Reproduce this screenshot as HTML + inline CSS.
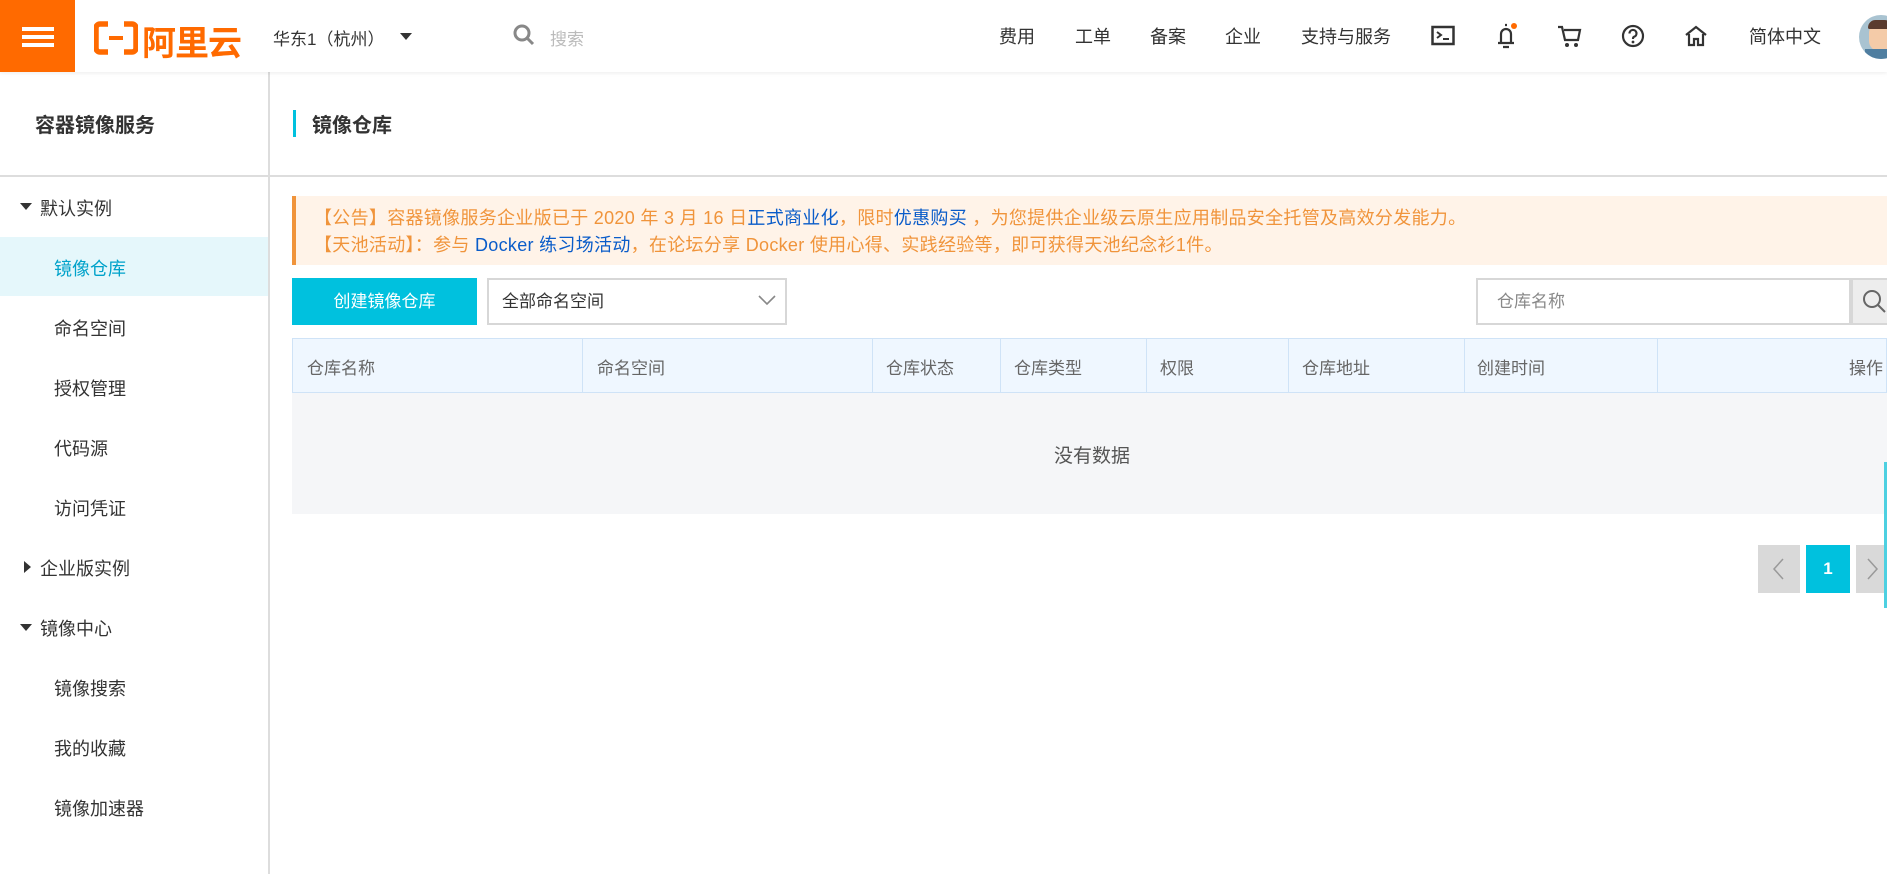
<!DOCTYPE html>
<html><head><meta charset="utf-8"><style>
*{margin:0;padding:0;box-sizing:border-box}
body{width:1887px;height:874px;overflow:hidden;background:#fff;font-family:"Liberation Sans","Noto Sans CJK SC",sans-serif;color:#333;position:relative}
.a{position:absolute;white-space:nowrap}
.hdr{position:absolute;left:0;top:0;width:1887px;height:72px;background:#fff;box-shadow:0 1px 4px rgba(0,0,0,.08);z-index:2}
.nav{font-size:18px;color:#333;top:23px}
.menu{font-size:18px;color:#333}
.th{font-size:17px;color:#666;top:354px}
.col{position:absolute;top:338px;width:1px;height:55px;background:#cfe3f7}
</style></head><body>
<div class="hdr">
 <div class="a" style="left:0;top:0;width:75px;height:72px;background:#ff6a00">
  <div class="a" style="left:22px;top:27px;width:32px;height:4px;background:#fff"></div>
  <div class="a" style="left:22px;top:35px;width:32px;height:4px;background:#fff"></div>
  <div class="a" style="left:22px;top:43px;width:32px;height:4px;background:#fff"></div>
 </div>
 <svg class="a" style="left:94px;top:21px" width="44" height="34" viewBox="0 0 44 34"><path d="M14 3H6a4 4 0 0 0-4 4v20a4 4 0 0 0 4 4h8M30 3h8a4 4 0 0 1 4 4v20a4 4 0 0 1-4 4h-8" stroke="#ff6a00" stroke-width="5.5" fill="none"/><rect x="15" y="15" width="14" height="4" fill="#ff6a00"/></svg>
 <div class="a" style="left:142px;top:16px;font-size:34px;font-weight:bold;color:#ff6a00;letter-spacing:-1px">阿里云</div>
 <div class="a nav" style="left:273px;top:25px;font-size:17px">华东1（杭州）</div>
 <div class="a" style="left:400px;top:33px;width:0;height:0;border-left:6px solid transparent;border-right:6px solid transparent;border-top:7px solid #333"></div>
 <svg class="a" style="left:513px;top:24px" width="22" height="22" viewBox="0 0 22 22"><circle cx="9" cy="9" r="7" stroke="#888" stroke-width="3" fill="none"/><path d="M14 14l6 6" stroke="#888" stroke-width="3"/></svg>
 <div class="a" style="left:550px;top:25px;font-size:17px;color:#bbb">搜索</div>
 <div class="a nav" style="left:999px">费用</div>
 <div class="a nav" style="left:1075px">工单</div>
 <div class="a nav" style="left:1150px">备案</div>
 <div class="a nav" style="left:1225px">企业</div>
 <div class="a nav" style="left:1301px">支持与服务</div>
 <svg class="a" style="left:1431px;top:25px" width="24" height="22" viewBox="0 0 24 22"><rect x="1.5" y="2" width="21" height="17" stroke="#333" stroke-width="2.5" fill="none"/><path d="M6 7l4 3-4 3M12 14h6" stroke="#333" stroke-width="2" fill="none"/></svg>
 <svg class="a" style="left:1495px;top:22px" width="24" height="28" viewBox="0 0 24 28"><path d="M10 3h2M6 21V12a5 5 0 0 1 10 0v9M3 21h16M8 25h6" stroke="#333" stroke-width="2.2" fill="none"/><circle cx="19" cy="4" r="3" fill="#ff6a00"/></svg>
 <svg class="a" style="left:1557px;top:24px" width="26" height="24" viewBox="0 0 26 24"><path d="M1 3h4l3 13h13l2-10H7" stroke="#333" stroke-width="2.2" fill="none"/><circle cx="10" cy="21" r="2" fill="#333"/><circle cx="19" cy="21" r="2" fill="#333"/></svg>
 <svg class="a" style="left:1621px;top:24px" width="24" height="24" viewBox="0 0 24 24"><circle cx="12" cy="12" r="10" stroke="#333" stroke-width="2.2" fill="none"/><path d="M8.5 9.5a3.5 3.5 0 1 1 4.5 3.3c-1 .4-1 1-1 2.2" stroke="#333" stroke-width="2.2" fill="none"/><circle cx="12" cy="18" r="1.4" fill="#333"/></svg>
 <svg class="a" style="left:1684px;top:24px" width="24" height="24" viewBox="0 0 24 24"><path d="M2 11L12 3l10 8M5 10v11h5v-6h4v6h5V10" stroke="#333" stroke-width="2.2" fill="none"/></svg>
 <div class="a nav" style="left:1749px">简体中文</div>
 <div class="a" style="left:1859px;top:15px;width:44px;height:44px;border-radius:50%;background:#a9c3d1;overflow:hidden">
  <div class="a" style="left:10px;top:8px;width:22px;height:28px;border-radius:10px;background:#f4cba8"></div>
  <div class="a" style="left:9px;top:5px;width:24px;height:9px;border-radius:10px 10px 2px 2px;background:#5a3b2e"></div>
  <div class="a" style="left:6px;top:34px;width:30px;height:12px;background:#4f7ea0"></div>
 </div>
</div>
<!-- sidebar -->
<div class="a" style="left:268px;top:72px;width:2px;height:802px;background:#ddd"></div>
<div class="a" style="left:0;top:175px;width:268px;height:2px;background:#ddd"></div>
<div class="a" style="left:35px;top:109px;font-size:20px;font-weight:bold;color:#333">容器镜像服务</div>
<div class="a" style="left:20px;top:203px;border-left:6px solid transparent;border-right:6px solid transparent;border-top:7px solid #333"></div>
<div class="a menu" style="left:40px;top:195px">默认实例</div>
<div class="a" style="left:0;top:237px;width:268px;height:59px;background:#e5f7fb"></div>
<div class="a menu" style="left:54px;top:255px;color:#00a2ca">镜像仓库</div>
<div class="a menu" style="left:54px;top:315px">命名空间</div>
<div class="a menu" style="left:54px;top:375px">授权管理</div>
<div class="a menu" style="left:54px;top:435px">代码源</div>
<div class="a menu" style="left:54px;top:495px">访问凭证</div>
<div class="a" style="left:24px;top:561px;border-top:6px solid transparent;border-bottom:6px solid transparent;border-left:7px solid #333"></div>
<div class="a menu" style="left:40px;top:555px">企业版实例</div>
<div class="a" style="left:20px;top:624px;border-left:6px solid transparent;border-right:6px solid transparent;border-top:7px solid #333"></div>
<div class="a menu" style="left:40px;top:615px">镜像中心</div>
<div class="a menu" style="left:54px;top:675px">镜像搜索</div>
<div class="a menu" style="left:54px;top:735px">我的收藏</div>
<div class="a menu" style="left:54px;top:795px">镜像加速器</div>
<!-- content -->
<div class="a" style="left:270px;top:175px;width:1617px;height:2px;background:#ddd"></div>
<div class="a" style="left:293px;top:110px;width:3px;height:27px;background:#00c1de"></div>
<div class="a" style="left:312px;top:109px;font-size:20px;font-weight:bold;color:#333">镜像仓库</div>
<div class="a" style="left:292px;top:196px;width:1595px;height:69px;background:#fff3e8;border-left:4px solid #f0943b"></div>
<div class="a" style="left:314px;top:205px;font-size:18px;letter-spacing:0.3px;color:#f0943b;line-height:27px">【公告】容器镜像服务企业版已于 2020 年 3 月 16 日<span style="color:#0a5cc9">正式商业化</span>，限时<span style="color:#0a5cc9">优惠购买</span> ，为您提供企业级云原生应用制品安全托管及高效分发能力。<br>【天池活动】：参与 <span style="color:#0a5cc9">Docker 练习场活动</span>，在论坛分享 Docker 使用心得、实践经验等，即可获得天池纪念衫1件。</div>
<div class="a" style="left:292px;top:278px;width:185px;height:47px;background:#00c1de;color:#fff;font-size:17px;text-align:center;line-height:47px">创建镜像仓库</div>
<div class="a" style="left:487px;top:278px;width:300px;height:47px;border:2px solid #d7d7d7;font-size:17px;line-height:43px;padding-left:13px;color:#333">全部命名空间</div>
<svg class="a" style="left:757px;top:293px" width="20" height="14" viewBox="0 0 20 14"><path d="M2 3l8 8 8-8" stroke="#888" stroke-width="1.6" fill="none"/></svg>
<div class="a" style="left:1476px;top:278px;width:375px;height:47px;border:2px solid #d7d7d7;font-size:17px;line-height:43px;padding-left:19px;color:#888">仓库名称</div>
<div class="a" style="left:1851px;top:278px;width:40px;height:47px;background:#ededed;border:2px solid #d7d7d7"></div>
<svg class="a" style="left:1862px;top:289px" width="25" height="25" viewBox="0 0 25 25"><circle cx="10" cy="10" r="8" stroke="#666" stroke-width="2" fill="none"/><path d="M16 16l7 7" stroke="#666" stroke-width="2"/></svg>
<div class="a" style="left:292px;top:338px;width:1595px;height:55px;background:#eff7ff;border:1px solid #cfe3f7"></div>
<div class="col" style="left:582px"></div><div class="col" style="left:872px"></div><div class="col" style="left:1000px"></div><div class="col" style="left:1146px"></div><div class="col" style="left:1288px"></div><div class="col" style="left:1464px"></div><div class="col" style="left:1657px"></div>
<div class="a th" style="left:307px">仓库名称</div>
<div class="a th" style="left:597px">命名空间</div>
<div class="a th" style="left:886px">仓库状态</div>
<div class="a th" style="left:1014px">仓库类型</div>
<div class="a th" style="left:1160px">权限</div>
<div class="a th" style="left:1302px">仓库地址</div>
<div class="a th" style="left:1477px">创建时间</div>
<div class="a th" style="left:1849px">操作</div>
<div class="a" style="left:292px;top:393px;width:1595px;height:121px;background:#f5f6f8"></div>
<div class="a" style="left:1054px;top:441px;font-size:19px;color:#555">没有数据</div>
<div class="a" style="left:1758px;top:545px;width:42px;height:48px;background:#d9d9d9"></div>
<svg class="a" style="left:1771px;top:557px" width="14" height="24" viewBox="0 0 14 24"><path d="M12 2L3 12l9 10" stroke="#999" stroke-width="1.5" fill="none"/></svg>
<div class="a" style="left:1806px;top:545px;width:44px;height:48px;background:#00c1de;color:#fff;font-size:17px;font-weight:bold;text-align:center;line-height:48px">1</div>
<div class="a" style="left:1856px;top:545px;width:31px;height:48px;background:#d9d9d9"></div>
<svg class="a" style="left:1866px;top:557px" width="14" height="24" viewBox="0 0 14 24"><path d="M2 2l9 10-9 10" stroke="#999" stroke-width="1.5" fill="none"/></svg>
<div class="a" style="left:1884px;top:462px;width:3px;height:146px;background:#4dd0e1"></div>
</body></html>
